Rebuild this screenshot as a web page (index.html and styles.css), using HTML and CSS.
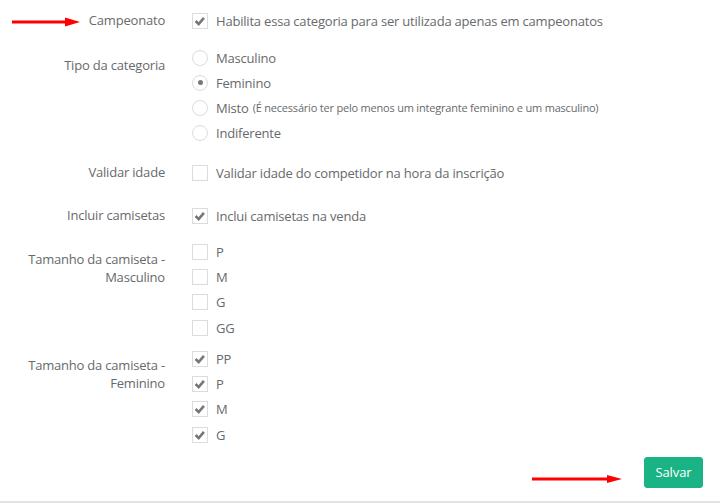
FILE: index.html
```html
<!DOCTYPE html>
<html lang="pt-BR">
<head>
<meta charset="utf-8">
<title>Categoria</title>
<link rel="stylesheet" href="styles.css">
</head>
<body>
<div class="page">
  <form class="form">
    <div class="row row-campeonato">
      <div class="label">Campeonato</div>
      <div class="controls">
        <label class="opt"><span class="box checked"><svg viewBox="0 0 16 16"><path d="M3 8 L6.5 11.5 L12.5 4.5"/></svg></span>Habilita essa categoria para ser utilizada apenas em campeonatos</label>
      </div>
    </div>

    <div class="row row-tipo">
      <div class="label multi">Tipo da categoria</div>
      <div class="controls">
        <label class="opt"><span class="radio"></span>Masculino</label>
        <label class="opt"><span class="radio checked"></span>Feminino</label>
        <label class="opt"><span class="radio"></span>Misto <small class="note">(É necessário ter pelo menos um integrante feminino e um masculino)</small></label>
        <label class="opt"><span class="radio"></span>Indiferente</label>
      </div>
    </div>

    <div class="row row-idade">
      <div class="label">Validar idade</div>
      <div class="controls">
        <label class="opt"><span class="box"></span>Validar idade do competidor na hora da inscrição</label>
      </div>
    </div>

    <div class="row row-camisetas">
      <div class="label">Incluir camisetas</div>
      <div class="controls">
        <label class="opt"><span class="box checked"><svg viewBox="0 0 16 16"><path d="M3 8 L6.5 11.5 L12.5 4.5"/></svg></span>Inclui camisetas na venda</label>
      </div>
    </div>

    <div class="row row-masc">
      <div class="label multi">Tamanho da camiseta -<br>Masculino</div>
      <div class="controls">
        <label class="opt"><span class="box"></span>P</label>
        <label class="opt"><span class="box"></span>M</label>
        <label class="opt"><span class="box"></span>G</label>
        <label class="opt"><span class="box"></span>GG</label>
      </div>
    </div>

    <div class="row row-fem">
      <div class="label multi">Tamanho da camiseta -<br>Feminino</div>
      <div class="controls">
        <label class="opt"><span class="box checked"><svg viewBox="0 0 16 16"><path d="M3 8 L6.5 11.5 L12.5 4.5"/></svg></span>PP</label>
        <label class="opt"><span class="box checked"><svg viewBox="0 0 16 16"><path d="M3 8 L6.5 11.5 L12.5 4.5"/></svg></span>P</label>
        <label class="opt"><span class="box checked"><svg viewBox="0 0 16 16"><path d="M3 8 L6.5 11.5 L12.5 4.5"/></svg></span>M</label>
        <label class="opt"><span class="box checked"><svg viewBox="0 0 16 16"><path d="M3 8 L6.5 11.5 L12.5 4.5"/></svg></span>G</label>
      </div>
    </div>

    <div class="actions">
      <button type="button" class="btn">Salvar</button>
    </div>
  </form>

  <svg class="arrow arrow-top" width="72" height="12" viewBox="0 0 72 12"><line x1="0" y1="6" x2="56" y2="6"/><polygon points="53,1.5 68,6 53,10.5"/></svg>
  <svg class="arrow arrow-bottom" width="94" height="12" viewBox="0 0 94 12"><line x1="0" y1="6" x2="78" y2="6"/><polygon points="75,2 90,6 75,10"/></svg>
</div>
</body>
</html>
```

FILE: styles.css
```css
* { box-sizing: border-box; }
html, body { margin: 0; padding: 0; background: #fff; }
body {
  font-family: "Open Sans", "Liberation Sans", sans-serif;
  font-size: 13px;
  letter-spacing: -0.2px;
  color: #676a6c;
}
.page {
  position: relative;
  width: 722px;
  height: 503px;
  overflow: hidden;
}
.form {
  padding-top: 8px;
  border-bottom: 2px solid #e3e3e3;
  width: 720px;
  height: 503px;
  display: flex;
  flex-direction: column;
}
.row {
  display: grid;
  grid-template-columns: 165px 1fr;
  column-gap: 27px;
}
.row-tipo { margin-top: 12px; }
.row-idade { margin-top: 15px; }
.row-camisetas { margin-top: 18px; }
.row-masc { margin-top: 11px; }
.row-fem { margin-top: 6px; }
.label {
  text-align: right;
  line-height: 25px;
  white-space: nowrap;
}
.label.multi {
  line-height: 18px;
  padding-top: 11px;
}
.row-fem .label.multi { padding-top: 10px; }
.controls {
  display: flex;
  flex-direction: column;
}
.row-masc .opt, .row-fem .opt { height: 25.3px; }
.opt {
  display: flex;
  align-items: center;
  height: 25px;
  gap: 8px;
  white-space: nowrap;
}
.note {
  font-size: 11px;
  margin-left: -4px;
}
.box {
  width: 16px;
  height: 16px;
  border: 1px solid #dcdcdc;
  background: #fff;
  flex: none;
  display: flex;
}
.box svg {
  width: 14px;
  height: 14px;
  margin: 0;
}
.box svg path {
  fill: none;
  stroke: #777;
  stroke-width: 3;
  stroke-linecap: butt;
  stroke-linejoin: miter;
}
.radio {
  width: 16px;
  height: 16px;
  border: 1px solid #dcdcdc;
  border-radius: 50%;
  flex: none;
  display: flex;
  align-items: center;
  justify-content: center;
}
.radio.checked::after {
  content: "";
  width: 5px;
  height: 5px;
  border-radius: 50%;
  background: #777;
}
.actions {
  display: flex;
  justify-content: flex-end;
  margin-top: 10px;
  padding-right: 17px;
}
.btn {
  font-family: "Open Sans", "Liberation Sans", sans-serif;
  font-size: 13px;
  letter-spacing: -0.1px;
  color: #fff;
  background: #1ab385;
  border: 1px solid #1ab385;
  border-radius: 3px;
  height: 31px;
  width: 59px;
  padding: 0;
  line-height: 29px;
}
.arrow {
  position: absolute;
}
.arrow line {
  stroke: #f00;
  stroke-width: 3;
}
.arrow polygon { fill: #f00; }
.arrow-top { left: 12px; top: 16px; }
.arrow-bottom { left: 532px; top: 473px; }
```
